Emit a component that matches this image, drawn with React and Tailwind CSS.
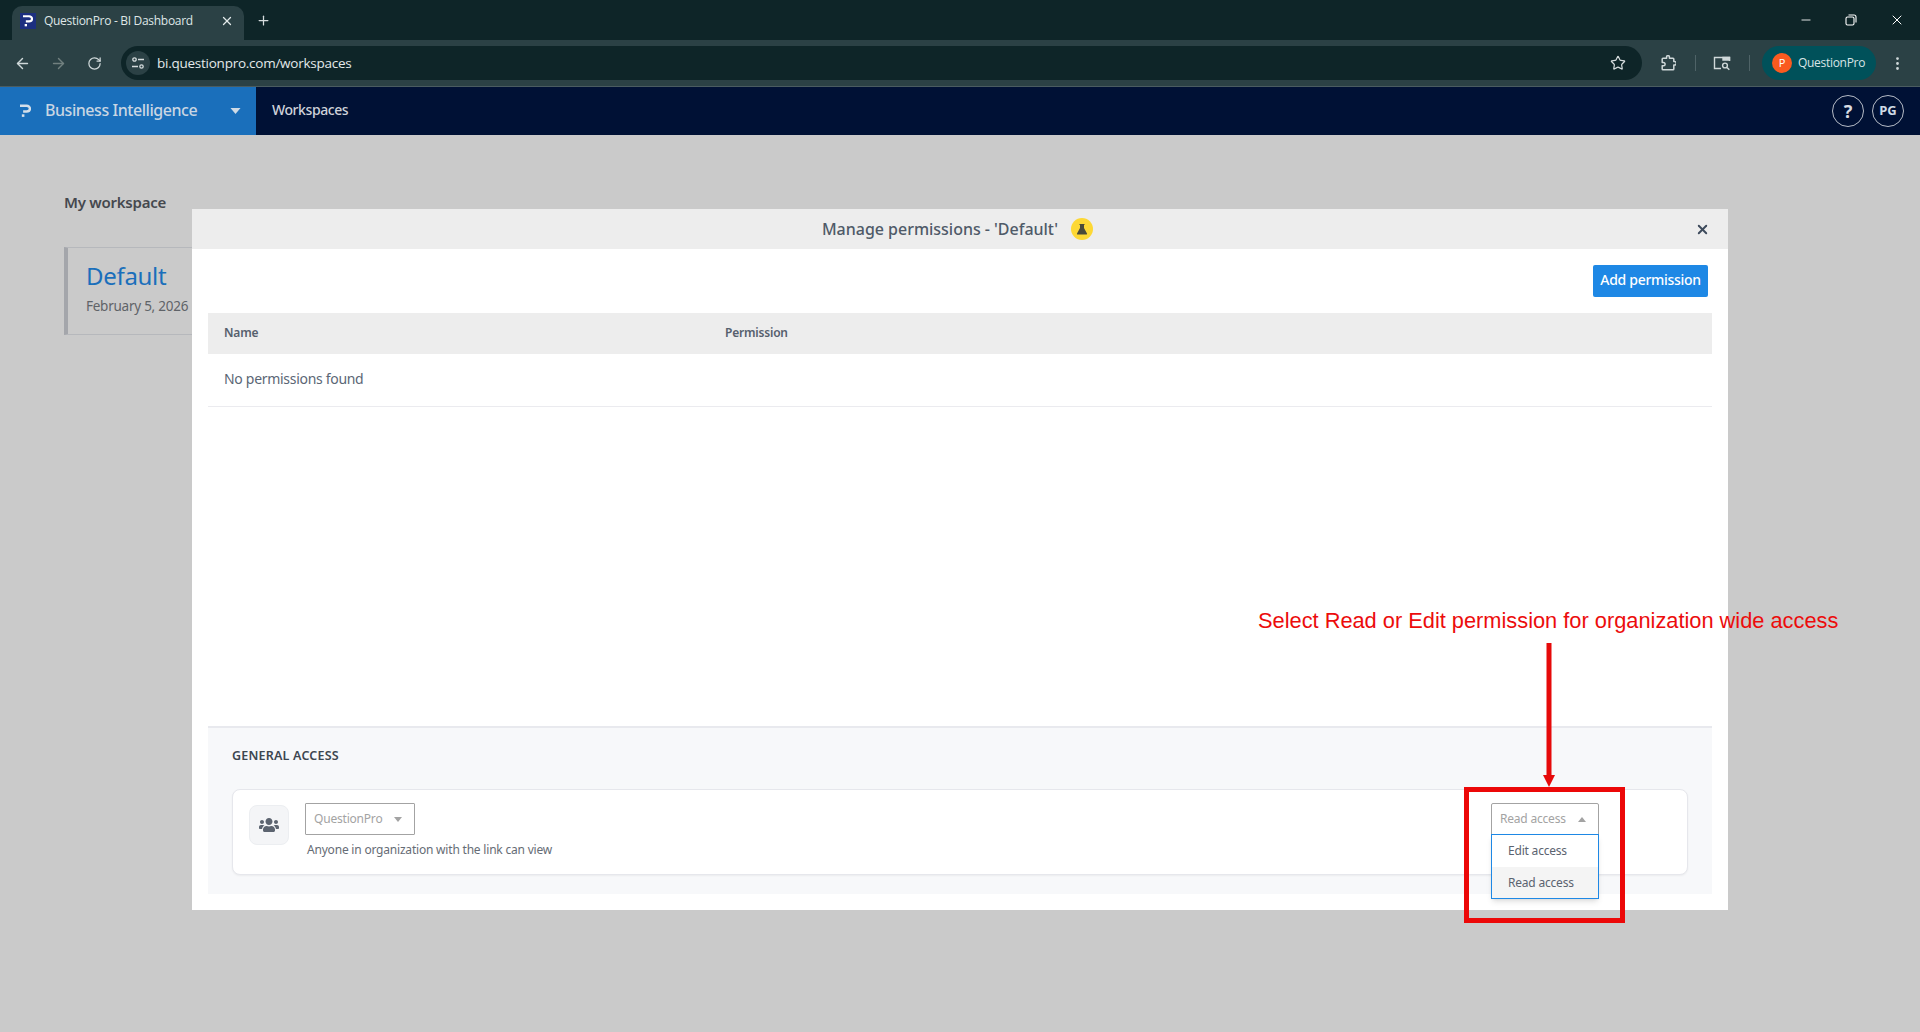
import React from 'react';
import { ArrowLeft, ArrowRight, RotateCw, Star, Minus, X, Plus, EllipsisVertical } from 'lucide-react';
import { FaUsers } from 'react-icons/fa';

const fira = { fontFamily: '"Noto Sans", sans-serif' };

const QpLogo = ({ className, color = '#fff' }) => (
  <svg viewBox="0 0 12 14" className={className} fill="none">
    <path d="M0 1.3h7.2c2.2 0 3.6 1.2 3.6 3.1s-1.4 3.1-3.6 3.1H3.4" stroke={color} strokeWidth="2.6" />
    <rect x="2" y="10.6" width="2.8" height="2.8" fill={color} />
  </svg>
);

const Caret = ({ up, color = '#a3a3a3', className = '' }) => (
  <svg viewBox="0 0 10 6" className={`w-[10px] h-[6px] ${className}`}>
    <path d={up ? 'M0 6 L5 0 L10 6 Z' : 'M0 0 L10 0 L5 6 Z'} fill={color} />
  </svg>
);

const BrowserChrome = () => (
  <div className="shrink-0" style={{ fontFamily: '"Open Sans", sans-serif' }}>
    {/* Tab strip */}
    <div className="h-[40px] bg-[#0e2528] flex items-end pl-[12px]">
      <div className="w-[232px] h-[34px] bg-[#2b4145] rounded-t-[10px] flex items-center pl-[8px] pr-[10px] pb-[4px]">
        <div className="w-[16px] h-[16px] bg-[#1c2f80] flex items-center justify-center">
          <QpLogo className="w-[10px] h-[12px]" />
        </div>
        <span className="ml-[8px] text-[12px] text-[#dfe6e7] whitespace-nowrap tracking-[-0.3px]">QuestionPro - BI Dashboard</span>
        <X className="w-[14px] h-[14px] text-[#e3e9ea] ml-auto" strokeWidth={2.2} />
      </div>
      <Plus className="w-[15px] h-[15px] text-[#d5dcdd] ml-[12px] mb-[12px]" strokeWidth={2} />
      <div className="ml-auto self-start flex items-center h-[40px] pb-[1px] pr-[15px] gap-[32px] text-white">
        <Minus className="w-[14px] h-[14px]" strokeWidth={1.5} />
        <svg viewBox="0 0 12 12" className="w-[12px] h-[12px]" fill="none" stroke="#fff" strokeWidth="1.1">
          <rect x="1" y="3" width="8" height="8" rx="1.5" />
          <path d="M3.5 1h5.5a2 2 0 0 1 2 2v5.5" />
        </svg>
        <X className="w-[16px] h-[16px]" strokeWidth={1.5} />
      </div>
    </div>
    {/* Toolbar */}
    <div className="h-[46px] bg-[#2b4145] flex items-center pl-[14px] pr-[14px] border-b border-[#4a5c60] box-content">
      <ArrowLeft className="w-[17px] h-[17px] text-[#cfd8d9]" strokeWidth={2} />
      <ArrowRight className="w-[17px] h-[17px] text-[#71807f] ml-[19px]" strokeWidth={2} />
      <RotateCw className="w-[15px] h-[15px] text-[#cfd8d9] ml-[20px]" strokeWidth={2} />
      <div className="ml-[19px] h-[34px] flex-1 rounded-full bg-[#0e2528] flex items-center pl-[5px] pr-[16px]">
        <div className="w-[24px] h-[24px] rounded-full bg-[#2b4145] flex items-center justify-center">
          <svg viewBox="0 0 14 14" className="w-[14px] h-[14px]" fill="none" stroke="#d5dcdd" strokeWidth="1.3">
            <circle cx="3.5" cy="3.5" r="1.7" />
            <path d="M7 3.5h6M1 10.5h6" />
            <circle cx="10.5" cy="10.5" r="1.7" />
          </svg>
        </div>
        <span className="ml-[7px] text-[13.5px] text-[#e3e9ea] tracking-[-0.25px]">bi.questionpro.com/workspaces</span>
        <Star className="w-[16px] h-[16px] text-[#d5dcdd] ml-auto" strokeWidth={1.8} />
      </div>
      <svg viewBox="0 0 16 16" className="w-[16px] h-[16px] ml-[18px] mr-[1px]" fill="none" stroke="#cfd8d9" strokeWidth="1.5" strokeLinejoin="round">
        <path d="M3 3.2h3.6V1.6a1 1 0 0 1 1-.8h.8a1 1 0 0 1 1 .8v1.6H13a.8.8 0 0 1 .8.8v2.6h.8a1.3 1.3 0 0 1 0 3.4h-.8v4a.8.8 0 0 1-.8.8H3a.8.8 0 0 1-.8-.8v-3.2h1.3a1.6 1.6 0 0 0 0-3.2H2.2V4a.8.8 0 0 1 .8-.8z" />
      </svg>
      <div className="w-px h-[16px] bg-[#4f6367] ml-[18px]" />
      <svg viewBox="0 0 18 16" className="w-[18px] h-[16px] ml-[17px]" fill="none" stroke="#cfd8d9" strokeWidth="1.4">
        <path d="M16.5 6V2.5h-15v11H8" />
        <path d="M10 2.5h6.5V5H10z" fill="#cfd8d9" />
        <circle cx="12" cy="10.5" r="2.4" />
        <path d="M14 12.5l2.3 2.3" />
      </svg>
      <div className="w-px h-[16px] bg-[#4f6367] ml-[18px]" />
      <div className="ml-[12px] w-[114px] h-[34px] rounded-full bg-[#00515a] flex items-center pl-[10px]">
        <div className="w-[20px] h-[20px] rounded-full bg-[#fa5a1f] text-white text-[11px] flex items-center justify-center">P</div>
        <span className="ml-[6px] text-[12px] text-[#d7e4e6] tracking-[-0.3px]">QuestionPro</span>
      </div>
      <EllipsisVertical className="w-[17px] h-[17px] text-[#cfd8d9] ml-[13px]" strokeWidth={2} />
    </div>
  </div>
);

const AppNav = () => (
  <div className="h-[48px] shrink-0 bg-[#001135] flex items-stretch" style={fira}>
    <div className="w-[256px] bg-[#1a6fbb] flex items-center pl-[20px] pr-[15px]">
      <QpLogo className="w-[11px] h-[14px]" color="#d5dfe9" />
      <span className="ml-[14px] pb-[2px] text-[16px] font-medium text-[#c9d6e3] tracking-[-0.45px] whitespace-nowrap">Business Intelligence</span>
      <Caret color="#cfdbe6" className="ml-auto !w-[11px]" />
    </div>
    <span className="self-center ml-[16px] pb-[3px] text-[14px] font-medium text-[#cfd3da] tracking-[-0.42px]">Workspaces</span>
    <div className="ml-auto flex items-center gap-[8px] pr-[16px]">
      <div className="w-[32px] h-[32px] rounded-full border border-[#b5bbc6] flex items-center justify-center text-[18px] font-bold text-[#d9dde3]">?</div>
      <div className="w-[32px] h-[32px] rounded-full border border-[#b5bbc6] flex items-center justify-center text-[13px] font-bold text-[#cfdbe6]">PG</div>
    </div>
  </div>
);

const WorkspaceBackground = () => (
  <div className="flex-1 bg-[#cacaca] pl-[64px] pt-[57px]" style={fira}>
    <h2 className="text-[15px] leading-[20px] font-semibold text-[#45484e] tracking-[-0.25px]">My workspace</h2>
    <div className="mt-[35px] w-[300px] h-[88px] border border-[#b6b8bc] border-l-[4px] border-l-[#a4a6ab] pl-[18px] pt-[12px]">
      <div className="text-[24px] leading-[32px] text-[#1a6fbb] tracking-[-0.3px]">Default</div>
      <div className="text-[13.5px] leading-[18px] text-[#5f6368] mt-[5px] tracking-[-0.25px]">February 5, 2026</div>
    </div>
  </div>
);

const GeneralAccess = () => (
  <div className="border-t-2 border-[#e8e9ee] bg-[#f7f8fa] h-[168px] pt-[19px] px-[24px]">
    <div className="text-[12.5px] leading-[18px] font-semibold text-[#3c4650] tracking-[0.2px]">GENERAL ACCESS</div>
    <div className="mt-[24px] h-[86px] bg-white rounded-[8px] border border-[#e6e7ec] shadow-xs flex items-start pl-[16px] pr-[88px] pt-[13px]">
      <div className="mt-[2px] w-[40px] h-[40px] rounded-[8px] bg-[#f4f5f7] border border-[#eceef1] flex items-center justify-center">
        <FaUsers className="w-[20px] h-[20px] text-[#5c6470]" />
      </div>
      <div className="ml-[16px]">
        <div className="w-[110px] h-[32px] border border-[#a3a3a3] rounded-[1px] flex items-center pl-[8px] pr-[12px]">
          <span className="text-[12px] text-[#a3a3a3] tracking-[-0.2px]">QuestionPro</span>
          <Caret className="ml-auto !w-[8px] !h-[5px]" />
        </div>
        <div className="mt-[6px] ml-[2px] text-[12px] leading-[18px] text-[#666c75] tracking-[-0.2px]">Anyone in organization with the link can view</div>
      </div>
      <div className="ml-auto relative w-[108px]">
        <div className="h-[32px] border border-[#a3a3a3] rounded-t-[2px] flex items-center pl-[8px] pr-[12px]">
          <span className="text-[12px] text-[#a3a3a3] tracking-[-0.2px]">Read access</span>
          <Caret up className="ml-auto !w-[8px] !h-[5px]" />
        </div>
        {/* open dropdown list hangs over the card */}
        <div className="absolute top-[31px] left-0 w-full h-[65px] bg-white border border-[#1e88e5] shadow-md z-10 text-[12px] text-[#5b6370] tracking-[-0.2px]">
          <div className="h-[32px] flex items-center pl-[16px]">Edit access</div>
          <div className="h-[31px] flex items-center pl-[16px] bg-[#f4f4f4]">Read access</div>
        </div>
      </div>
    </div>
  </div>
);

const PermissionsModal = () => (
  <div className="absolute left-[192px] top-[209px] w-[1536px] h-[701px] bg-white flex flex-col" style={fira}>
    <div className="h-[40px] shrink-0 bg-[#ededed] pr-[5px] flex items-center justify-center relative">
      <span className="text-[16px] font-medium text-[#4f5a68] tracking-[-0.02px] pb-[1px]">Manage permissions - 'Default'</span>
      <span className="ml-[13px] w-[22px] h-[22px] rounded-full bg-[#fdd835] flex items-center justify-center">
        <svg viewBox="0 0 12 12" className="w-[12px] h-[12px]" fill="#4a4a3a">
          <path d="M3.5 1h5v1H8v3l3 5.5a.7.7 0 0 1-.6 1H1.6a.7.7 0 0 1-.6-1L4 5V2h-.5z" />
        </svg>
      </span>
      <X className="absolute right-[18px] w-[15px] h-[15px] text-[#3d4a5c]" strokeWidth={3} />
    </div>
    <div className="flex-1 flex flex-col px-[16px] pb-[16px] min-h-0">
      <div className="flex justify-end pt-[16px] pr-[4px] h-[64px] shrink-0">
        <button className="w-[115px] h-[32px] pb-[3px] bg-[#1e88e5] rounded-[2px] text-white text-[14px] font-medium tracking-[-0.3px]">Add permission</button>
      </div>
      <div className="h-[41px] shrink-0 pb-[1px] bg-[#ededed] flex items-center text-[12px] font-semibold text-[#56606e] tracking-[-0.2px]">
        <span className="w-[517px] pl-[16px]">Name</span>
        <span>Permission</span>
      </div>
      <div className="h-[53px] shrink-0 pb-[3px] border-b border-[#ebebef] flex items-center pl-[16px] text-[14px] text-[#5b6675] tracking-[-0.3px]">No permissions found</div>
      <div className="flex-1" />
      <GeneralAccess />
    </div>
  </div>
);

// Red callout drawn on top of the screenshot
const Annotation = () => (
  <>
    <div className="absolute left-[1258px] top-[607px] text-[21.8px] leading-[28px] text-[#ec0c0c] whitespace-nowrap" style={{ fontFamily: '"Liberation Sans", sans-serif' }}>
      Select Read or Edit permission for organization wide access
    </div>
    <svg className="absolute left-[1538px] top-[642px] w-[22px] h-[146px]" viewBox="0 0 22 146">
      <rect x="8.5" y="1" width="5" height="134" fill="#e60a0a" />
      <path d="M5 133 H17 L11 145 Z" fill="#e60a0a" />
    </svg>
    <div className="absolute left-[1464px] top-[787px] w-[161px] h-[136px] border-[5px] border-[#ec0808]" />
  </>
);

export default function App() {
  return (
    <div className="relative w-[1920px] h-[1032px] overflow-hidden flex flex-col bg-[#cacaca]">
      <BrowserChrome />
      <AppNav />
      <WorkspaceBackground />
      <PermissionsModal />
      <Annotation />
    </div>
  );
}
